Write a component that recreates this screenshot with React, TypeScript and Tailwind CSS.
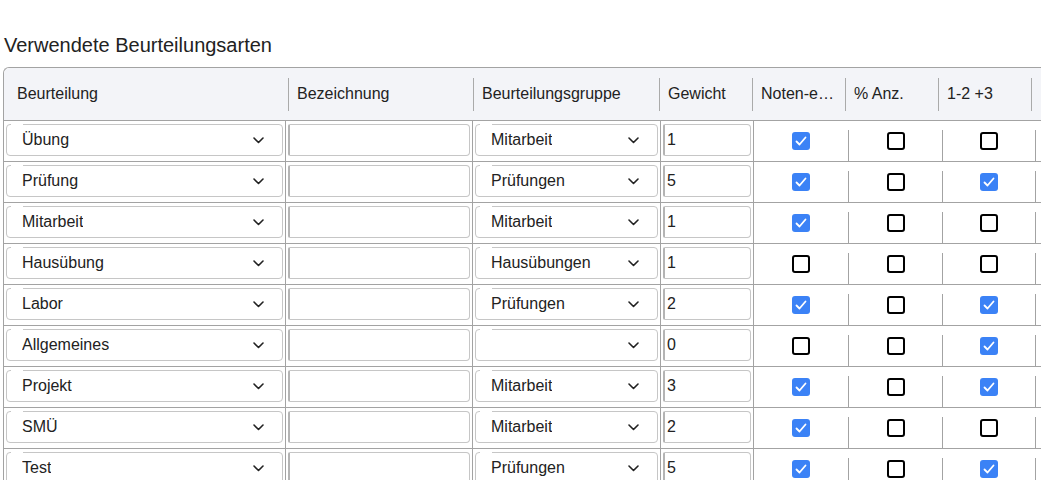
import React from "react";

type Row = {
  art: string;
  gruppe: string;
  gewicht: string;
  checks: [boolean, boolean, boolean];
};

const rows: Row[] = [
  { art: "Übung", gruppe: "Mitarbeit", gewicht: "1", checks: [true, false, false] },
  { art: "Prüfung", gruppe: "Prüfungen", gewicht: "5", checks: [true, false, true] },
  { art: "Mitarbeit", gruppe: "Mitarbeit", gewicht: "1", checks: [true, false, false] },
  { art: "Hausübung", gruppe: "Hausübungen", gewicht: "1", checks: [false, false, false] },
  { art: "Labor", gruppe: "Prüfungen", gewicht: "2", checks: [true, false, true] },
  { art: "Allgemeines", gruppe: "", gewicht: "0", checks: [false, false, true] },
  { art: "Projekt", gruppe: "Mitarbeit", gewicht: "3", checks: [true, false, true] },
  { art: "SMÜ", gruppe: "Mitarbeit", gewicht: "2", checks: [true, false, false] },
  { art: "Test", gruppe: "Prüfungen", gewicht: "5", checks: [true, false, true] },
];

function Chevron() {
  return (
    <svg width="11" height="7" viewBox="0 0 11 7" fill="none" className="shrink-0">
      <path d="M1 1L5.5 5.5L10 1" stroke="#222" strokeWidth="1.6" strokeLinecap="round" strokeLinejoin="round" />
    </svg>
  );
}

function SelectBox({ value }: { value: string }) {
  return (
    <div className="relative flex h-[32px] w-full items-center justify-between rounded-[4px] border border-[#c6c6c6] pl-[15px] pr-[18px]">
      <span className="absolute left-[4px] top-[-1px] h-[2px] w-[12px] bg-white" />
      <span className="truncate">{value}</span>
      <Chevron />
    </div>
  );
}

function InputBox({ value }: { value: string }) {
  return (
    <div className="flex h-[32px] w-full items-center rounded-l-[2px] rounded-r-[4px] border border-[#c6c6c6] border-l-2 border-l-[#b4b4b4] pl-[2px]">
      <span>{value}</span>
    </div>
  );
}

function Check({ checked }: { checked: boolean }) {
  if (checked) {
    return (
      <span className="flex h-[18px] w-[18px] items-center justify-center rounded-[3px] bg-[#3b82f6]">
        <svg width="14" height="14" viewBox="0 0 14 14" fill="none">
          <path d="M2.5 7.5L5.5 10.5L11.5 3.5" stroke="white" strokeWidth="1.8" strokeLinecap="round" strokeLinejoin="round" />
        </svg>
      </span>
    );
  }
  return <span className="block h-[18px] w-[18px] rounded-[3px] border-2 border-black bg-white" />;
}

function HeadCell({ w, label, first }: { w: string; label: string; first?: boolean }) {
  return (
    <div className={`flex h-full shrink-0 items-center justify-between ${w}`}>
      <span className={`whitespace-nowrap ${first ? "pl-[13px]" : "pl-[8px]"}`}>{label}</span>
      <span className="block h-[33px] w-px bg-[#aaaaaa]" />
    </div>
  );
}

function CheckCell({ w, checked }: { w: string; checked: boolean }) {
  return (
    <div className={`flex h-full shrink-0 ${w}`}>
      <div className="flex flex-1 justify-center pt-[11px]">
        <Check checked={checked} />
      </div>
      <span className="block h-[31px] w-px self-end bg-[#a3a3a3]" />
    </div>
  );
}

export default function App() {
  return (
    <div
      className="h-[480px] w-[1041px] overflow-hidden bg-white text-[16px] text-[#222]"
      style={{ fontFamily: '"Liberation Sans", Arial, sans-serif' }}
    >
      <div className="pl-[4px] pt-[34px] text-[20px] leading-[22px]">Verwendete Beurteilungsarten</div>
      <div className="ml-[3px] mt-[11px] rounded-tl-[6px] border-l border-t border-[#a3a3a3]">
        <div className="flex h-[53px] border-b border-[#a3a3a3] bg-[#f3f4f8] rounded-tl-[6px]">
          <HeadCell w="w-[285px]" label="Beurteilung" first />
          <HeadCell w="w-[185px]" label="Bezeichnung" />
          <HeadCell w="w-[186px]" label="Beurteilungsgruppe" />
          <HeadCell w="w-[93px]" label="Gewicht" />
          <HeadCell w="w-[93px]" label="Noten-e…" />
          <HeadCell w="w-[93px]" label="% Anz." />
          <HeadCell w="w-[93px]" label="1-2 +3" />
          <div className="flex-1" />
        </div>
        {rows.map((r, i) => (
          <div key={i} className="flex h-[41px] border-b border-[#a3a3a3]">
            <div className="w-[282px] shrink-0 border-r border-[#a3a3a3] px-[2px] pt-[3px]">
              <SelectBox value={r.art} />
            </div>
            <div className="w-[187px] shrink-0 border-r border-[#a3a3a3] px-[2px] pt-[3px]">
              <InputBox value="" />
            </div>
            <div className="w-[188px] shrink-0 border-r border-[#a3a3a3] px-[2px] pt-[3px]">
              <SelectBox value={r.gruppe} />
            </div>
            <div className="w-[93px] shrink-0 border-r border-[#a3a3a3] px-[2px] pt-[3px]">
              <InputBox value={r.gewicht} />
            </div>
            <CheckCell w="w-[95px]" checked={r.checks[0]} />
            <CheckCell w="w-[94px]" checked={r.checks[1]} />
            <CheckCell w="w-[93px]" checked={r.checks[2]} />
            <div className="flex-1" />
          </div>
        ))}
      </div>
    </div>
  );
}
